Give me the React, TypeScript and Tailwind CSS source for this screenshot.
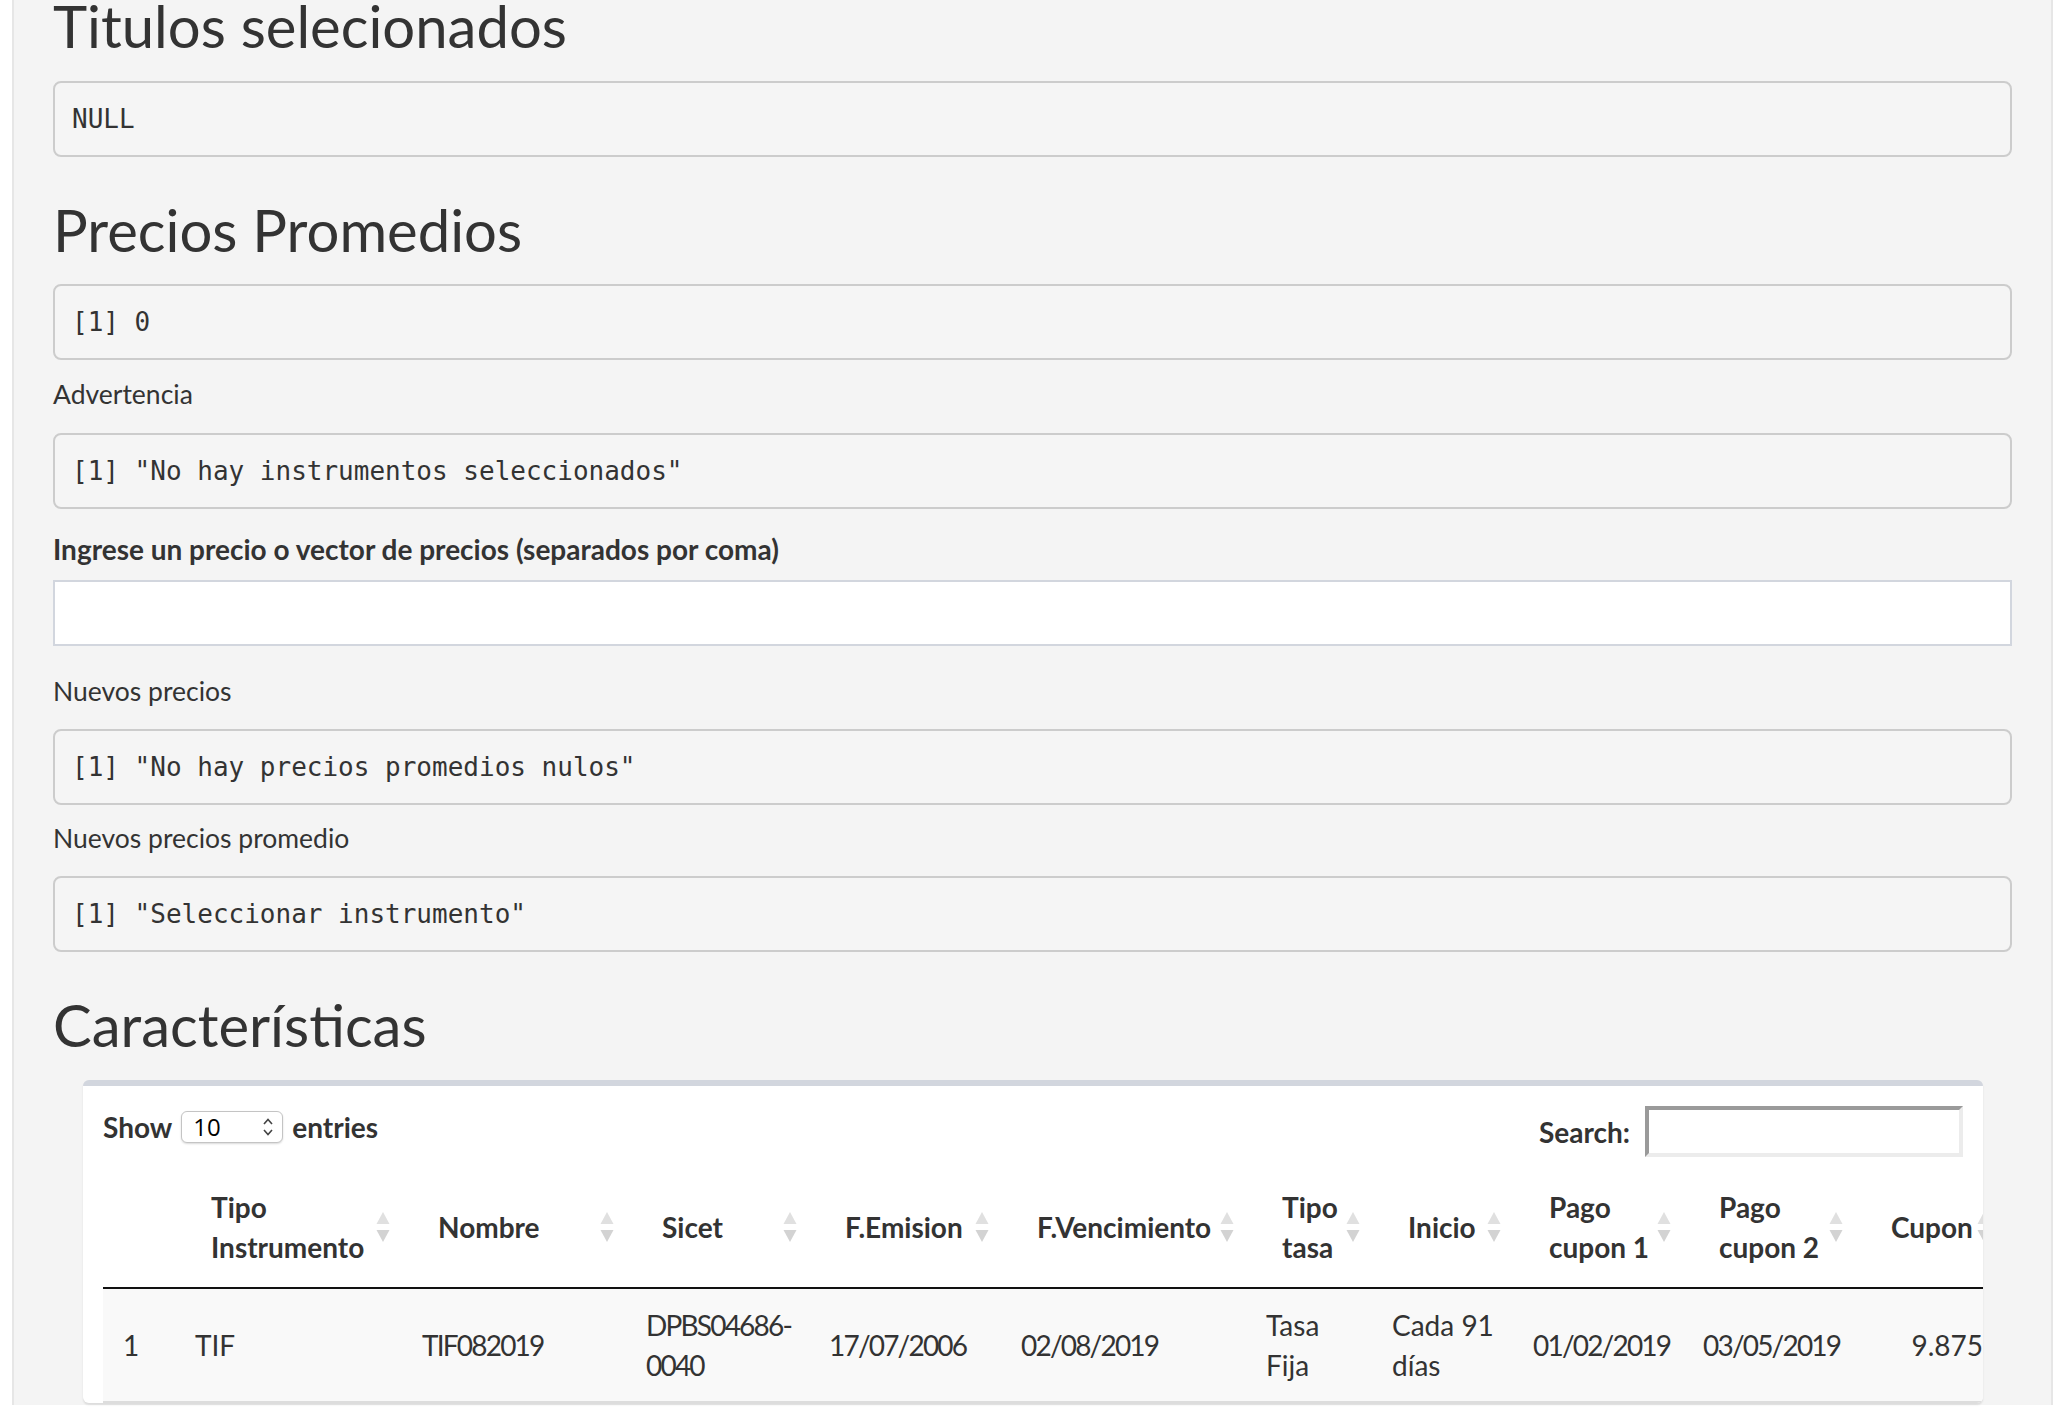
import React from 'react'

function Output({ children, className = '' }: { children: React.ReactNode; className?: string }) {
  return (
    <div
      className={`flex h-[76px] items-center rounded-[8px] border-2 border-[#cccccc] bg-[#f5f5f5] pl-[17px] font-['DejaVu_Sans_Mono',monospace] text-[26px] whitespace-pre text-[#333] ${className}`}
    >
      {children}
    </div>
  )
}

function SortIcon() {
  return (
    <svg
      width="14"
      height="32"
      viewBox="0 0 14 32"
      className="absolute right-[12px] top-1/2 -translate-y-1/2"
    >
      <path d="M7 1 L13.5 13 L0.5 13 Z" fill="#e0e0e0" />
      <path d="M0.5 19 L13.5 19 L7 31 Z" fill="#d3d3d3" />
    </svg>
  )
}

const columns: { w: number; label: React.ReactNode }[] = [
  { w: 72, label: '' },
  { w: 227, label: <>Tipo<br />Instrumento</> },
  { w: 224, label: 'Nombre' },
  { w: 183, label: 'Sicet' },
  { w: 192, label: 'F.Emision' },
  { w: 245, label: 'F.Vencimiento' },
  { w: 126, label: <>Tipo<br />tasa</> },
  { w: 141, label: 'Inicio' },
  { w: 170, label: <>Pago<br />cupon 1</> },
  { w: 172, label: <>Pago<br />cupon 2</> },
  { w: 148, label: 'Cupon' },
]

// cells with many digits get tighter tracking (Lato figures run wide)
const row: { v: React.ReactNode; tight?: boolean }[] = [
  { v: '1' },
  { v: 'TIF' },
  { v: 'TIF082019', tight: true },
  { v: <>DPBS04686-<br />0040</>, tight: true },
  { v: '17/07/2006', tight: true },
  { v: '02/08/2019', tight: true },
  { v: <>Tasa<br />Fija</> },
  { v: <>Cada 91<br />días</> },
  { v: '01/02/2019', tight: true },
  { v: '03/05/2019', tight: true },
  { v: '9.875' },
]

function Chevrons() {
  return (
    <svg width="12" height="20" viewBox="0 0 12 20" fill="none" stroke="#444" strokeWidth="1.6">
      <path d="M2 7 L6 2.5 L10 7" />
      <path d="M2 13 L6 17.5 L10 13" />
    </svg>
  )
}

export default function App() {
  return (
    <div className="h-[1412px] overflow-hidden bg-white pl-[12px] pr-[10px] font-[Lato,sans-serif] text-[#333]">
      <div className="h-full border-x-2 border-[#e6e6e6] bg-[#f4f4f4] px-[39px]">
        <h2 className="-mt-[7px] h-[66px] text-[58px] leading-[66px] font-normal">Titulos selecionados</h2>
        <Output className="mt-[22px]">NULL</Output>

        <h2 className="mt-[40px] h-[66px] text-[58px] leading-[66px] font-normal">Precios Promedios</h2>
        <Output className="mt-[21px]">[1] 0</Output>

        <div className="mt-[14px] h-[40px] text-[26.5px] leading-[40px]">Advertencia</div>
        <Output className="mt-[19px]">[1] "No hay instrumentos seleccionados"</Output>

        <label className="mt-[20px] block h-[40px] text-[28px] leading-[40px] font-bold">
          Ingrese un precio o vector de precios (separados por coma)
        </label>
        <input className="mt-[11px] block h-[66px] w-full border-2 border-[#d2d6de] bg-white outline-none" />

        <div className="mt-[25px] h-[40px] text-[26.5px] leading-[40px]">Nuevos precios</div>
        <Output className="mt-[18px]">[1] "No hay precios promedios nulos"</Output>

        <div className="mt-[13px] h-[40px] text-[26.5px] leading-[40px]">Nuevos precios promedio</div>
        <Output className="mt-[18px]">[1] "Seleccionar instrumento"</Output>

        <h2 className="mt-[40px] h-[66px] text-[58px] leading-[66px] font-normal">Características</h2>

        <div className="mt-[22px] ml-[30px] mr-[29px] overflow-hidden rounded-[6px] border-t-[6px] border-[#d2d6de] bg-white px-[20px] pt-[20px] shadow-[0_2px_2px_rgba(0,0,0,0.1)]">
          <div className="flex h-[51px] items-start justify-between">
            <div className="flex h-[42px] items-center gap-[9px] text-[28px] font-bold">
              <span>Show</span>
              <div className="flex h-[32px] w-[102px] items-center justify-between rounded-[6px] border border-[#c4c4c4] bg-white pl-[11px] pr-[8px] shadow-[0_1px_2px_rgba(0,0,0,0.15)]">
                <span className="font-['Open_Sans',sans-serif] text-[24px] leading-[28px] font-normal text-black">10</span>
                <Chevrons />
              </div>
              <span>entries</span>
            </div>
            <div className="flex h-[51px] items-center gap-[15px] text-[28px] font-bold">
              <span>Search:</span>
              <input className="h-[51px] w-[318px] border-4 border-t-[#9a9a9a] border-l-[#9a9a9a] border-b-[#ececec] border-r-[#ececec] bg-white outline-none" />
            </div>
          </div>

          <table className="mt-[10px] w-[1900px] table-fixed border-collapse text-[28px] leading-[40px]">
            <colgroup>
              {columns.map((c, i) => (
                <col key={i} style={{ width: c.w }} />
              ))}
            </colgroup>
            <thead>
              <tr>
                {columns.map((c, i) => (
                  <th
                    key={i}
                    className="relative border-b-2 border-[#111] py-[20px] pl-[36px] pr-[36px] text-left align-middle font-bold whitespace-nowrap"
                  >
                    {c.label}
                    {i > 0 && <SortIcon />}
                  </th>
                ))}
              </tr>
            </thead>
            <tbody>
              <tr className="bg-[#f9f9f9]">
                {row.map((c, i) => (
                  <td
                    key={i}
                    className={`border-b-2 border-[#dddddd] px-[20px] py-[16px] align-middle whitespace-nowrap ${i === 10 ? 'text-right' : 'text-left'} ${c.tight ? 'tracking-[-1.8px]' : ''}`}
                  >
                    {c.v}
                  </td>
                ))}
              </tr>
            </tbody>
          </table>
        </div>
      </div>
    </div>
  )
}
